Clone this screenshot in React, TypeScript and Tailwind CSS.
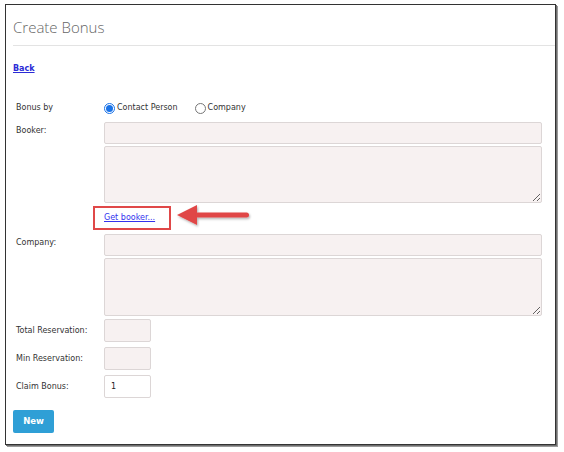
import React from "react";

const fieldCls =
  "block rounded-[2px] border border-[#dcd6d6] bg-[#f7f1f1] outline-none";

function Radio({ checked, label }: { checked?: boolean; label: string }) {
  return (
    <label className="flex items-center gap-[2px]">
      {checked ? (
        <span className="flex h-[11px] w-[11px] items-center justify-center rounded-full border border-[#1a73e8] bg-white">
          <span className="h-[7px] w-[7px] rounded-full bg-[#1a73e8]" />
        </span>
      ) : (
        <span className="h-[11px] w-[11px] rounded-full border border-[#767676] bg-white" />
      )}
      <span>{label}</span>
    </label>
  );
}

function Row({ label, children, className = "" }: { label: string; children: React.ReactNode; className?: string }) {
  return (
    <div className={`flex ${className}`}>
      <div className="w-[88px] shrink-0 pt-[3px]">{label}</div>
      <div className="flex-1">{children}</div>
    </div>
  );
}

export default function App() {
  return (
    <div className="h-[452px] w-[564px] bg-white pl-[5px] pt-[4px]">
      <div
        className="h-[441px] w-[551px] border border-[#333] bg-white shadow-[1px_1px_0_#6f6f6f,2px_2px_0_#9a9a9a]"
        style={{ fontFamily: '"DejaVu Sans", Verdana, sans-serif' }}
      >
        <div className="ml-[7px] border-b border-[#e3e3e3] pb-[8px] pt-[13px]">
          <h1
            className="text-[15px] font-light leading-[19px] text-[#666]"
            style={{ fontFamily: '"Open Sans", "Noto Sans", sans-serif' }}
          >
            Create Bonus
          </h1>
        </div>

        <div className="pl-[7px] pt-[17px] text-[8px] text-[#333]">
          <a href="#" className="font-bold text-[#2b2bd6] underline">
            Back
          </a>

          <div className="mt-[27px] pl-[3px] pr-[13px]">
            <div className="flex items-center">
              <div className="w-[88px] shrink-0">Bonus by</div>
              <div className="flex items-center gap-[17px]">
                <Radio checked label="Contact Person" />
                <Radio label="Company" />
              </div>
            </div>

            <Row label="Booker:" className="mt-[8px]">
              <input className={`${fieldCls} h-[22px] w-full`} />
              <textarea className={`${fieldCls} mt-[2px] h-[57px] w-full`} />
            </Row>

            <div className="ml-[77px] mt-[3px] flex items-center">
              <div className="flex h-[24px] w-[78px] items-center border-2 border-[#e04848] pl-[9px]">
                <a href="#" className="text-[#3333ee] underline">
                  Get booker...
                </a>
              </div>
              <svg width="80" height="26" viewBox="0 0 80 26" className="ml-[2px] -mt-[4px]">
                <defs>
                  <filter id="sh" x="-10%" y="-30%" width="130%" height="160%">
                    <feDropShadow dx="1" dy="1.5" stdDeviation="0.8" floodColor="#000" floodOpacity="0.3" />
                  </filter>
                </defs>
                <g filter="url(#sh)" fill="#e04646">
                  <polygon points="4,12 24,2 24,22" />
                  <rect x="22" y="9.5" width="54" height="5" rx="2.5" />
                </g>
              </svg>
            </div>

            <Row label="Company:" className="mt-[4px]">
              <input className={`${fieldCls} h-[22px] w-full`} />
              <textarea className={`${fieldCls} mt-[2px] h-[58px] w-full`} />
            </Row>

            <div className="mt-[3px] flex flex-col gap-[5px]">
              <div className="flex items-center">
                <div className="w-[88px] shrink-0">Total Reservation:</div>
                <input className={`${fieldCls} h-[23px] w-[47px]`} />
              </div>
              <div className="flex items-center">
                <div className="w-[88px] shrink-0">Min Reservation:</div>
                <input className={`${fieldCls} h-[23px] w-[47px]`} />
              </div>
              <div className="flex items-center">
                <div className="w-[88px] shrink-0">Claim Bonus:</div>
                <input
                  defaultValue="1"
                  className="block h-[23px] w-[47px] rounded-[2px] border border-[#dcd6d6] bg-white pl-[6px] text-[8px] text-[#222] outline-none"
                />
              </div>
            </div>
          </div>

          <button className="mt-[12px] h-[23px] w-[41px] rounded-[2px] bg-[#2f9fd6] text-[8.5px] font-bold text-white">
            New
          </button>
        </div>
      </div>
    </div>
  );
}
